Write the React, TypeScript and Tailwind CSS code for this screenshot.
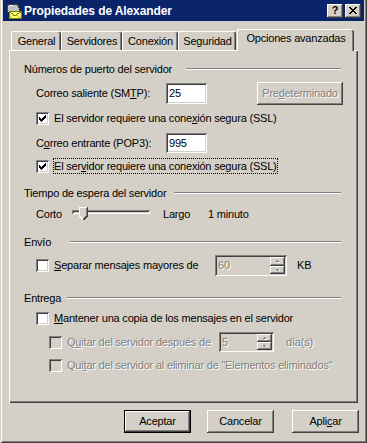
import React from "react";

const raised =
  "shadow-[inset_-1px_-1px_#404040,inset_1px_1px_#fff,inset_-2px_-2px_#808080,inset_2px_2px_#d4d0c8]";
const sunken =
  "shadow-[inset_1px_1px_#808080,inset_-1px_-1px_#fff,inset_2px_2px_#404040,inset_-2px_-2px_#d4d0c8]";
const dim = "text-[#808080] [text-shadow:1px_1px_0_#fff]";

function Check({ checked = false, disabled = false }: { checked?: boolean; disabled?: boolean }) {
  return (
    <span className={`relative block w-[13px] h-[13px] shrink-0 ${sunken} ${disabled ? "bg-[#d4d0c8]" : "bg-white"}`}>
      {checked && (
        <svg className="absolute left-[3px] top-[3px]" width="7" height="7" shapeRendering="crispEdges">
          {[2, 3, 4, 3, 2, 1, 0].map((y, x) => (
            <rect key={x} x={x} y={y} width="1" height="3" fill="#000" />
          ))}
        </svg>
      )}
    </span>
  );
}

function Header({ title, w, mt }: { title: string; w: string; mt: string }) {
  return (
    <div className={`flex items-center h-[14px] pl-[14px] pr-[17px] ${mt}`}>
      <span className={`shrink-0 ${w}`}>{title}</span>
      <div className="flex-1 h-[2px] border-t border-t-[#808080] border-b border-b-white" />
    </div>
  );
}

function Arrow({ up }: { up?: boolean }) {
  return (
    <svg width="6" height="4" shapeRendering="crispEdges">
      {up ? (
        <>
          <path d="M2 1h1v1h1v1H1V2h1z" fill="#fff" transform="translate(1,1)" />
          <path d="M2 0h1v1h1v1H1V1h1z" fill="#808080" transform="translate(0,1)" />
        </>
      ) : (
        <>
          <path d="M1 0h3v1H3v1H2V1H1z" fill="#fff" transform="translate(1,1)" />
          <path d="M1 0h3v1H3v1H2V1H1z" fill="#808080" transform="translate(0,1)" />
        </>
      )}
    </svg>
  );
}

function Spin({ value, w, h }: { value: string; w: string; h: string }) {
  return (
    <div className={`flex items-stretch bg-[#d4d0c8] p-[2px] shrink-0 ${sunken} ${w} ${h}`}>
      <span className={`flex-1 flex items-center pl-[1px] ${dim}`}>{value}</span>
      <div className="flex flex-col w-[15px]">
        <div className={`flex-1 flex items-center justify-center bg-[#d4d0c8] ${raised}`}>
          <Arrow up />
        </div>
        <div className={`flex-1 flex items-center justify-center bg-[#d4d0c8] ${raised}`}>
          <Arrow />
        </div>
      </div>
    </div>
  );
}

function Btn({
  children,
  def = false,
  disabled = false,
  w = "w-[67px]",
}: {
  children: React.ReactNode;
  def?: boolean;
  disabled?: boolean;
  w?: string;
}) {
  return (
    <div
      className={`flex items-center justify-center h-[23px] bg-[#d4d0c8] ${w} ${raised} ${
        def ? "border border-black" : ""
      } ${disabled ? dim : ""}`}
    >
      {children}
    </div>
  );
}

function Tab({ label, w, selected = false }: { label: string; w: string; selected?: boolean }) {
  return (
    <div
      className={`flex justify-center bg-[#d4d0c8] border-l border-t border-white rounded-t-[2px] shadow-[inset_-1px_0_#404040,inset_-2px_0_#808080] ${w} ${
        selected ? "relative z-10 h-[22px] -mb-[1px] pt-[3px]" : "h-[19px] items-center"
      }`}
    >
      {label}
    </div>
  );
}

function TitleIcon() {
  return (
    <svg width="17" height="17" viewBox="0 0 17 17" shapeRendering="crispEdges">
      <path d="M2 6 Q2 2 8 2 Q14 2 14 6 V10 H2 Z" fill="#c0c0c0" stroke="#404040" />
      <path d="M3 5 Q4 3 8 3" stroke="#fff" fill="none" />
      <rect x="4" y="9.5" width="12" height="7" fill="#ffff80" stroke="#808000" />
      <path d="M4.5 10 L10 13.5 L15.5 10" stroke="#808000" fill="none" />
      <path d="M4.5 16 L8.5 13 M15.5 16 L11.5 13" stroke="#c0c000" fill="none" />
    </svg>
  );
}

export default function App() {
  return (
    <div className="w-[367px] h-[443px] overflow-hidden bg-[#d4d0c8] px-[3px] font-['Liberation_Sans',Arial,sans-serif] text-[11px] tracking-[-0.2px] text-black leading-none shadow-[inset_1px_0_#d4d0c8,inset_-1px_-1px_#404040,inset_2px_0_#fff,inset_-2px_-2px_#808080]">
      {/* title bar */}
      <div className="flex items-center h-[21px] bg-[#0a246a]">
        <div className="ml-[2px]">
          <TitleIcon />
        </div>
        <span className="ml-[2px] text-white font-bold text-[12px] tracking-[-0.1px]">Propiedades de Alexander</span>
        <div className="ml-auto mr-[3px] flex gap-[2px]">
          <div className={`w-[16px] h-[14px] bg-[#d4d0c8] flex items-center justify-center font-bold text-[11px] ${raised}`}>
            ?
          </div>
          <div className={`w-[16px] h-[14px] bg-[#d4d0c8] flex items-center justify-center ${raised}`}>
            <svg width="8" height="7" shapeRendering="crispEdges">
              <path d="M0 0h2v1h1v1h2V1h1V0h2v1H7v1H6v1H5v1h1v1h1v1h1v1H6V6H5V5H3v1H2v1H0V6h1V5h1V4h1V3H2V2H1V1H0z" fill="#000" />
            </svg>
          </div>
        </div>
      </div>

      {/* tabs */}
      <div className="flex items-end h-[21px] mt-[8px] ml-[8px]">
        <Tab label="General" w="w-[50px]" />
        <Tab label="Servidores" w="w-[61px]" />
        <Tab label="Conexión" w="w-[56px]" />
        <Tab label="Seguridad" w="w-[58px]" />
        <div className="ml-[1px]">
          <Tab label="Opciones avanzadas" w="w-[117px]" selected />
        </div>
      </div>

      {/* panel */}
      <div className="ml-[6px] w-[349px] h-[353px] border-l border-t border-white shadow-[inset_-1px_-1px_#404040,inset_-2px_-2px_#808080] flex flex-col">
        <Header title="Números de puerto del servidor" w="w-[162px]" mt="mt-[11px]" />

        <div className="flex items-center h-[23px] pl-[26px] mt-[6px]">
          <span className="w-[130px] shrink-0">
            Correo saliente (SM<u>T</u>P):
          </span>
          <div className={`w-[41px] h-[21px] bg-white flex items-center pl-[3px] ${sunken}`}>25</div>
          <div className="ml-[50px]">
            <Btn w="w-[86px]" disabled>
              Pre<u>d</u>eterminado
            </Btn>
          </div>
        </div>

        <div className="flex items-center h-[16px] pl-[26px] mt-[5px]">
          <Check checked />
          <span className="ml-[5px]">
            El servidor requiere una cone<u>x</u>ión segura (SSL)
          </span>
        </div>

        <div className="flex items-center h-[20px] pl-[26px] mt-[7px]">
          <span className="w-[130px] shrink-0">
            C<u>o</u>rreo entrante (POP3):
          </span>
          <div className={`w-[41px] h-[20px] bg-white flex items-center pl-[3px] ${sunken}`}>995</div>
        </div>

        <div className="flex items-center h-[16px] pl-[26px] mt-[5px]">
          <Check checked />
          <span className="ml-[4px] h-[16px] flex items-center border border-dotted border-black">
            El ser<u>v</u>idor requiere una conexión segura (SSL)
          </span>
        </div>

        <Header title="Tiempo de espera del servidor" w="w-[150px]" mt="mt-[12px]" />

        <div className="flex items-center h-[20px] pl-[26px] mt-[4px]">
          <span className="w-[36px] shrink-0">Corto</span>
          <div className="relative w-[78px] h-[20px] shrink-0">
            <div className="absolute left-0 right-0 top-[6px] h-[4px] bg-[#d4d0c8] shadow-[inset_1px_1px_#808080,inset_-1px_-1px_#fff,inset_2px_2px_#404040]" />
            <svg className="absolute left-[7px] top-[3px]" width="9" height="13" viewBox="0 0 9 13" shapeRendering="crispEdges">
              <polygon points="0,0 9,0 9,9 4.5,13 0,9" fill="#d4d0c8" />
              <path d="M0.5 9 V0.5 H8" stroke="#fff" fill="none" />
              <path d="M0.5 9 L4.5 13" stroke="#fff" fill="none" />
              <path d="M8.5 0 V9 L4.5 13" stroke="#404040" fill="none" />
              <path d="M7.5 1 V8.6 L4.5 11.6" stroke="#808080" fill="none" />
            </svg>
          </div>
          <span className="ml-[13px] w-[45px] shrink-0">Largo</span>
          <span>1 minuto</span>
        </div>

        <Header title="Envío" w="w-[46px]" mt="mt-[11px]" />

        <div className="flex items-center h-[21px] pl-[26px] mt-[6px]">
          <Check />
          <span className="ml-[5px] w-[161px] shrink-0">
            <u>S</u>eparar mensajes mayores de
          </span>
          <Spin value="60" w="w-[72px]" h="h-[21px]" />
          <span className="ml-[10px]">KB</span>
        </div>

        <Header title="Entrega" w="w-[43px]" mt="mt-[15px]" />

        <div className="flex items-center h-[16px] pl-[26px] mt-[5px]">
          <Check />
          <span className="ml-[5px]">
            <u>M</u>antener una copia de los mensajes en el servidor
          </span>
        </div>

        <div className="flex items-center h-[20px] pl-[39px] mt-[6px]">
          <Check disabled />
          <span className={`ml-[5px] w-[152px] shrink-0 ${dim}`}>
            Q<u>u</u>itar del servidor después de
          </span>
          <Spin value="5" w="w-[55px]" h="h-[20px]" />
          <span className={`ml-[12px] ${dim}`}>día(s)</span>
        </div>

        <div className="flex items-center h-[16px] pl-[39px] mt-[5px]">
          <Check disabled />
          <span className={`ml-[5px] ${dim}`}>
            Qui<u>t</u>ar del servidor al eliminar de "Elementos eliminados"
          </span>
        </div>
      </div>

      {/* buttons */}
      <div className="flex justify-end mt-[7px] mr-[5px]">
        <Btn def>Aceptar</Btn>
        <div className="ml-[16px]">
          <Btn>Cancelar</Btn>
        </div>
        <div className="ml-[18px]">
          <Btn>
            Apli<u>c</u>ar
          </Btn>
        </div>
      </div>
    </div>
  );
}
